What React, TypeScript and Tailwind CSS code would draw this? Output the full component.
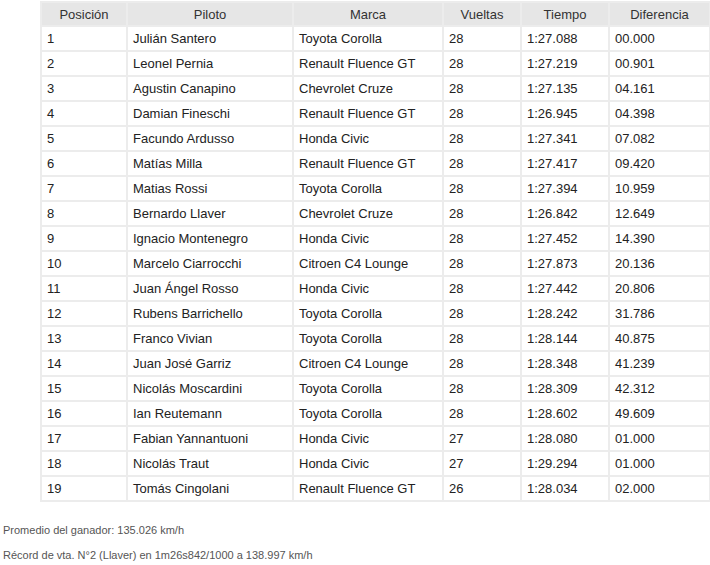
import React from "react";

const rows: [string, string, string, string, string, string][] = [
  ["1", "Julián Santero", "Toyota Corolla", "28", "1:27.088", "00.000"],
  ["2", "Leonel Pernia", "Renault Fluence GT", "28", "1:27.219", "00.901"],
  ["3", "Agustin Canapino", "Chevrolet Cruze", "28", "1:27.135", "04.161"],
  ["4", "Damian Fineschi", "Renault Fluence GT", "28", "1:26.945", "04.398"],
  ["5", "Facundo Ardusso", "Honda Civic", "28", "1:27.341", "07.082"],
  ["6", "Matías Milla", "Renault Fluence GT", "28", "1:27.417", "09.420"],
  ["7", "Matias Rossi", "Toyota Corolla", "28", "1:27.394", "10.959"],
  ["8", "Bernardo Llaver", "Chevrolet Cruze", "28", "1:26.842", "12.649"],
  ["9", "Ignacio Montenegro", "Honda Civic", "28", "1:27.452", "14.390"],
  ["10", "Marcelo Ciarrocchi", "Citroen C4 Lounge", "28", "1:27.873", "20.136"],
  ["11", "Juan Ángel Rosso", "Honda Civic", "28", "1:27.442", "20.806"],
  ["12", "Rubens Barrichello", "Toyota Corolla", "28", "1:28.242", "31.786"],
  ["13", "Franco Vivian", "Toyota Corolla", "28", "1:28.144", "40.875"],
  ["14", "Juan José Garriz", "Citroen C4 Lounge", "28", "1:28.348", "41.239"],
  ["15", "Nicolás Moscardini", "Toyota Corolla", "28", "1:28.309", "42.312"],
  ["16", "Ian Reutemann", "Toyota Corolla", "28", "1:28.602", "49.609"],
  ["17", "Fabian Yannantuoni", "Honda Civic", "27", "1:28.080", "01.000"],
  ["18", "Nicolás Traut", "Honda Civic", "27", "1:29.294", "01.000"],
  ["19", "Tomás Cingolani", "Renault Fluence GT", "26", "1:28.034", "02.000"],
];

const headers = ["Posición", "Piloto", "Marca", "Vueltas", "Tiempo", "Diferencia"];
const widths = ["w-[86px]", "w-[166px]", "w-[150px]", "w-[78px]", "w-[88px]", "w-[101px]"];

export default function App() {
  return (
    <div
      className="w-[710px] h-[565px] bg-white text-[#222]"
      style={{ fontFamily: '"Liberation Sans", Arial, sans-serif' }}
    >
      <div className="pt-[1px] pl-[40px]">
        <table className="border-collapse table-fixed w-[669px] text-[13px]">
          <colgroup>
            {widths.map((w, i) => (
              <col key={i} className={w} />
            ))}
          </colgroup>
          <thead>
            <tr>
              {headers.map((h) => (
                <th
                  key={h}
                  className="h-[24px] border-2 border-[#ececec] bg-[#e6e6e6] font-normal text-center text-[#333] p-0 leading-none"
                >
                  {h}
                </th>
              ))}
            </tr>
          </thead>
          <tbody>
            {rows.map((r) => (
              <tr key={r[0]}>
                {r.map((c, i) => (
                  <td
                    key={i}
                    className="h-[25px] border-2 border-[#ececec] pl-[5px] py-0 leading-none whitespace-nowrap"
                  >
                    {c}
                  </td>
                ))}
              </tr>
            ))}
          </tbody>
        </table>
      </div>
      <div className="pl-[3px] pt-[16px] text-[11px] text-[#555] leading-[25px]">
        <p>Promedio del ganador: 135.026 km/h</p>
        <p>Récord de vta. N°2 (Llaver) en 1m26s842/1000 a 138.997 km/h</p>
      </div>
    </div>
  );
}
